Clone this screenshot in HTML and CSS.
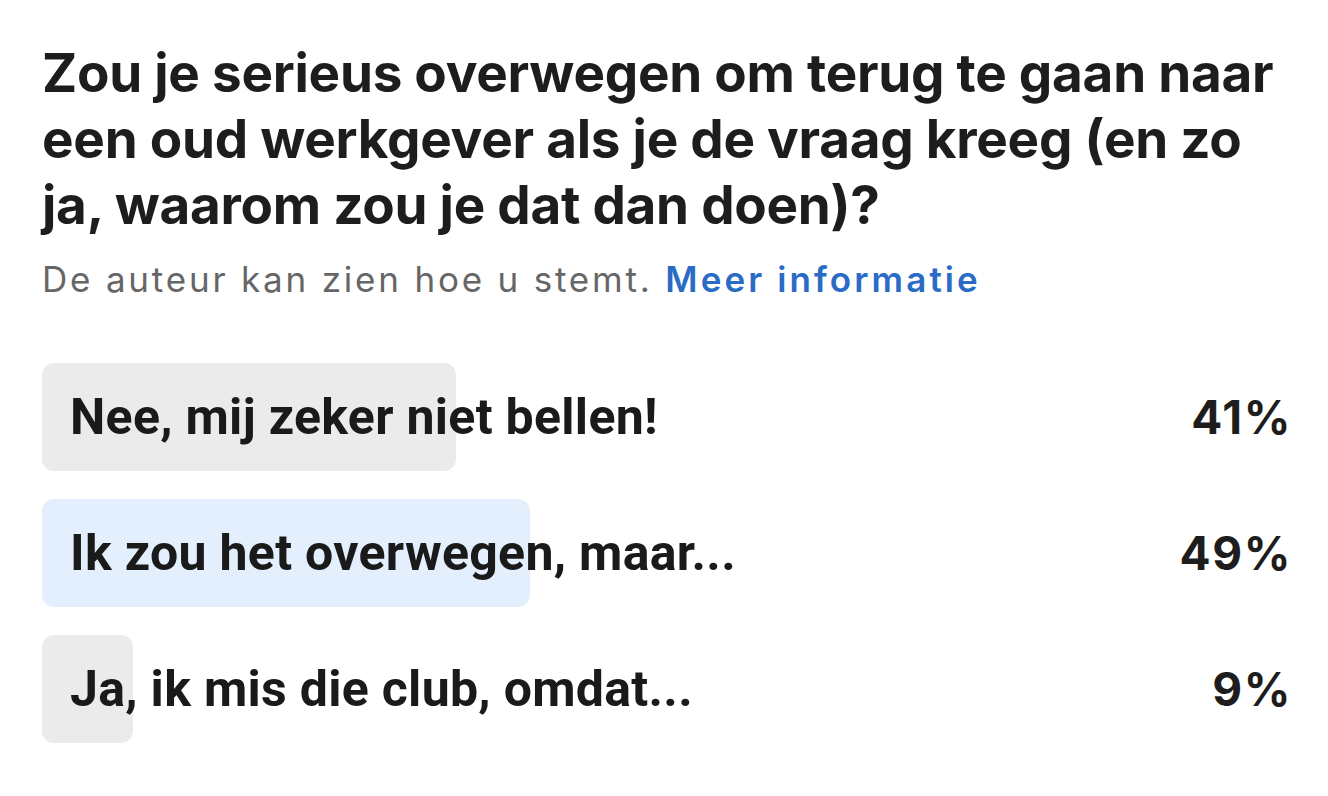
FILE: index.html
```html
<!DOCTYPE html>
<html lang="nl">
<head>
<meta charset="utf-8">
<title>Poll</title>
<link rel="stylesheet" href="styles.css">
</head>
<body>
<div class="poll">
  <h1 class="question">Zou je serieus overwegen om terug te gaan naar een oud werkgever als je de vraag kreeg (en zo ja, waarom zou je dat dan doen)?</h1>
  <p class="note">De auteur kan zien hoe u stemt. <a class="more" href="#">Meer informatie</a></p>
  <ul class="options">
    <li class="option">
      <div class="track"><div class="fill" style="width:41%"></div><span class="label">Nee, mij zeker niet bellen!</span></div>
      <span class="pct">41%</span>
    </li>
    <li class="option">
      <div class="track"><div class="fill fill-mine" style="width:48.3%"></div><span class="label">Ik zou het overwegen, maar...</span></div>
      <span class="pct">49%</span>
    </li>
    <li class="option">
      <div class="track"><div class="fill" style="width:9%"></div><span class="label">Ja, ik mis die club, omdat...</span></div>
      <span class="pct">9%</span>
    </li>
  </ul>
</div>
</body>
</html>
```
FILE: styles.css
```css
* { box-sizing: border-box; }
html, body { margin: 0; padding: 0; background: #fff; }
body { font-family: Inter, "Liberation Sans", sans-serif; color: #1d1d1d; }
.poll { padding: 40px 38px 0 42px; }
.question {
  margin: 0;
  font-size: 53px;
  line-height: 66px;
  font-weight: 700;
  letter-spacing: -0.25px;
  color: #1d1d1d;
  max-width: 1255px;
}
.note {
  margin: 19px 0 0;
  font-size: 35px;
  line-height: 44px;
  letter-spacing: 2.8px;
  color: #666666;
  font-weight: 400;
}
.more { color: #2a6bc5; font-weight: 600; text-decoration: none; letter-spacing: 3.1px; }
.options { list-style: none; margin: 62px 0 0; padding: 0; display: flex; flex-direction: column; gap: 28px; }
.option { display: flex; align-items: center; }
.track { position: relative; flex: 0 0 1010px; height: 108px; display: flex; align-items: center; }
.fill { position: absolute; left: 0; top: 0; bottom: 0; background: #ebebeb; border-radius: 12px; }
.fill-mine { background: #e3effc; }
.label {
  position: relative;
  padding-left: 28px;
  font-family: Roboto, "Liberation Sans", sans-serif;
  font-size: 50px;
  font-weight: 700;
  letter-spacing: 0.3px;
  color: #1a1a1a;
  white-space: nowrap;
}
.pct {
  margin-left: auto;
  margin-right: -2px;
  font-size: 46px;
  font-weight: 700;
  letter-spacing: 1.6px;
  color: #1d1d1d;
}
```
